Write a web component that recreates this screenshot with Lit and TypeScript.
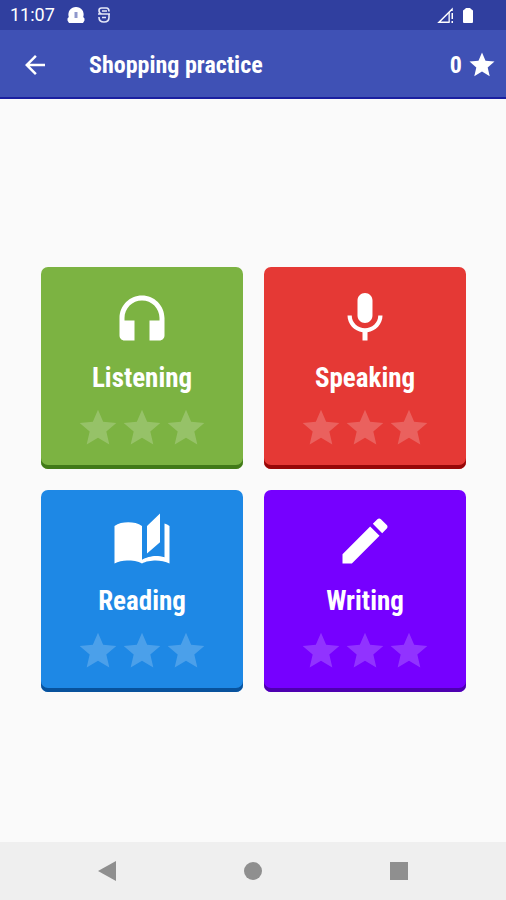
import { LitElement, html, svg, css } from "lit";
import { customElement, property } from "lit/decorators.js";

const STAR =
  "M12 17.27L18.18 21l-1.64-7.03L22 9.24l-7.19-.61L12 2 9.19 8.63 2 9.24l5.46 4.73L5.82 21z";

const ICONS = {
  listening: svg`<path d="M12 3c-4.97 0-9 4.03-9 9v7c0 1.1.9 2 2 2h4v-8H5v-1c0-3.87 3.13-7 7-7s7 3.13 7 7v1h-4v8h4c1.1 0 2-.9 2-2v-7c0-4.97-4.03-9-9-9z"/>`,
  speaking: svg`<path d="M12 14c1.66 0 2.99-1.34 2.99-3L15 5c0-1.66-1.34-3-3-3S9 3.34 9 5v6c0 1.66 1.34 3 3 3zm5.3-3c0 3-2.54 5.1-5.3 5.1S6.7 14 6.7 11H5c0 3.41 2.72 6.23 6 6.72V21h2v-3.28c3.28-.48 6-3.3 6-6.72h-1.7z"/>`,
  reading: svg`<path d="M19.2 1L14 6v11l5.2-4.5zM21 5v13.5c-1.1-.35-2.3-.5-3.5-.5-1.7 0-4.15.65-5.5 1.5V6c-1.45-1.1-3.55-1.5-5.500-1.500S2.450 4.900 1 6v15c1.350-.750 3.400-1.200 5-1.200 1.950 0 4.550.200 6 1.200 1.350-.850 3.800-1.200 5.500-1.200 1.650 0 4.100.400 5.500 1.200V6c-.6-.45-1.250-.750-2-1z"/>`,
  writing: svg`<path d="M3 17.25V21h3.75L17.81 9.94l-3.75-3.75L3 17.25zM20.71 7.04c.39-.39.39-1.02 0-1.41l-2.34-2.34c-.39-.39-1.02-.39-1.41 0l-1.83 1.83 3.75 3.75 1.83-1.83z"/>`,
};

type Skill = keyof typeof ICONS;

@customElement("status-bar")
class StatusBar extends LitElement {
  static styles = css`
    :host {
      display: flex;
      align-items: center;
      justify-content: space-between;
      height: 30px;
      padding: 0 32px 0 10px;
      background: #303f9f;
      color: #fff;
      font: 18px/30px Roboto, sans-serif;
    }
    .group {
      display: flex;
      align-items: center;
      gap: 8px;
    }
    .left {
      gap: 12px;
    }
    svg {
      display: block;
      fill: currentColor;
    }
  `;
  render() {
    return html`
      <div class="group left">
        <span>11:07</span>
        <svg width="18" height="18" viewBox="0 0 18 18">
          <path d="M9 1a7.500 7.500 0 0 1 7.200 10l1.300 1.500v2L16 17H2L.5 14.500v-2L1.800 11A7.500 7.500 0 0 1 9 1z" />
          <path d="M7.500 6h3v6h-3z" fill="#8f98cc" />
        </svg>
        <svg width="14" height="18" viewBox="0 0 14 18">
          <path
            d="M12 5.500Q12 2 9.500 2h-5Q2 2 2 4.500T4.500 8H12v3.500q0 4.500-5 4.500t-5-4.500V11M1 8h12M5 5h5M5 11.500h4"
            fill="none" stroke="#e4e7f8" stroke-width="1.600"
          />
        </svg>
      </div>
      <div class="group">
        <svg width="17" height="17" viewBox="0 0 17 17">
          <path
            d="M12.500 15.200H2L15 2.200V4"
            fill="none" stroke="#fff" stroke-width="1.500"
          />
          <path d="M11.500 6l1.300-1v10.500h-1.300zM14.500 6H16v6h-1.500zM14.500 14H16v2h-1.500z" />
        </svg>
        <svg width="12" height="17" viewBox="0 0 12 17">
          <path d="M3 2l1-1h4l1 1 2 1.500V15q0 1-1 1H2q-1 0-1-1V3.500z" />
        </svg>
      </div>
    `;
  }
}

@customElement("skill-tile")
class SkillTile extends LitElement {
  @property() skill: Skill = "listening";
  @property() label = "";

  static styles = css`
    :host {
      display: block;
    }
    .tile {
      display: flex;
      flex-direction: column;
      align-items: center;
      justify-content: flex-start;
      box-sizing: border-box;
      width: 100%;
      aspect-ratio: 1;
      margin: 0;
      padding: 21px 0 0;
      border: 0;
      border-radius: 7px;
      color: #fff;
      cursor: pointer;
    }
    .listening {
      background: #7cb342;
      box-shadow: inset 0 -4px #417a18;
    }
    .speaking {
      background: #e53935;
      box-shadow: inset 0 -4px #970808;
    }
    .reading {
      background: #1e88e5;
      box-shadow: inset 0 -4px #08529c;
    }
    .writing {
      background: #7600ff;
      box-shadow: inset 0 -4px #4d00b0;
    }
    svg {
      display: block;
      fill: currentColor;
    }
    .icon {
      width: 60px;
      height: 60px;
    }
    .label {
      margin-top: 14px;
      font: bold 27px/32px "Roboto Condensed", "Liberation Sans Narrow", Roboto, sans-serif;
    }
    .stars {
      display: flex;
      margin-top: 12px;
      opacity: 0.2;
    }
    .star {
      width: 44px;
      height: 44px;
    }
  `;
  render() {
    return html`
      <button class="tile ${this.skill}">
        <svg class="icon" viewBox="0 0 24 24">${ICONS[this.skill]}</svg>
        <span class="label">${this.label}</span>
        <span class="stars">
          ${[1, 2, 3].map(
            () => html`<svg class="star" viewBox="0 0 24 24"><path d=${STAR} /></svg>`
          )}
        </span>
      </button>
    `;
  }
}

@customElement("app-root")
class AppRoot extends LitElement {
  static styles = css`
    :host {
      display: flex;
      flex-direction: column;
      min-height: 100vh;
      background: #fafafa;
    }
    button {
      display: flex;
      align-items: center;
      justify-content: center;
      margin: 0;
      padding: 0;
      border: 0;
      background: none;
      color: inherit;
      cursor: pointer;
    }
    svg {
      display: block;
      fill: currentColor;
    }
    .bar {
      display: flex;
      align-items: center;
      box-sizing: border-box;
      height: 69px;
      padding: 3px 9px 0 20px;
      border-bottom: 2px solid #1a1fa0;
      background: #3f51b5;
      color: #fff;
      font: bold 24px/32px "Roboto Condensed", "Liberation Sans Narrow", Roboto, sans-serif;
    }
    .title {
      flex: 1;
      margin: 0 0 0 39px;
      font: inherit;
    }
    .score {
      display: flex;
      align-items: center;
      gap: 5px;
    }
    .content {
      flex: 1;
      display: flex;
      flex-direction: column;
      justify-content: center;
      padding: 18px 40px 0 41px;
    }
    .grid {
      display: grid;
      grid-template-columns: 1fr 1fr;
      gap: 21px;
    }
    .nav {
      display: flex;
      justify-content: center;
      gap: 116px;
      height: 58px;
      background: #efefef;
      color: #8f8f8f;
    }
    .nav button {
      width: 30px;
    }
  `;
  render() {
    return html`
      <status-bar></status-bar>
      <header class="bar">
        <button aria-label="Back">
          <svg width="30" height="30" viewBox="0 0 24 24">
            <path d="M20 11H7.83l5.590-5.590L12 4l-8 8 8 8 1.410-1.410L7.830 13H20v-2z" />
          </svg>
        </button>
        <h1 class="title">Shopping practice</h1>
        <span class="score">
          0
          <svg width="30" height="30" viewBox="0 0 24 24"><path d=${STAR} /></svg>
        </span>
      </header>
      <main class="content">
        <div class="grid">
          <skill-tile skill="listening" label="Listening"></skill-tile>
          <skill-tile skill="speaking" label="Speaking"></skill-tile>
          <skill-tile skill="reading" label="Reading"></skill-tile>
          <skill-tile skill="writing" label="Writing"></skill-tile>
        </div>
      </main>
      <nav class="nav">
        <button aria-label="Back">
          <svg width="20" height="20" viewBox="0 0 20 20"><path d="M1 10L19 0v20z" /></svg>
        </button>
        <button aria-label="Home">
          <svg width="20" height="20" viewBox="0 0 20 20"><circle cx="10" cy="10" r="9" /></svg>
        </button>
        <button aria-label="Recent apps">
          <svg width="20" height="20" viewBox="0 0 20 20"><path d="M1 1h18v18H1z" /></svg>
        </button>
      </nav>
    `;
  }
}
